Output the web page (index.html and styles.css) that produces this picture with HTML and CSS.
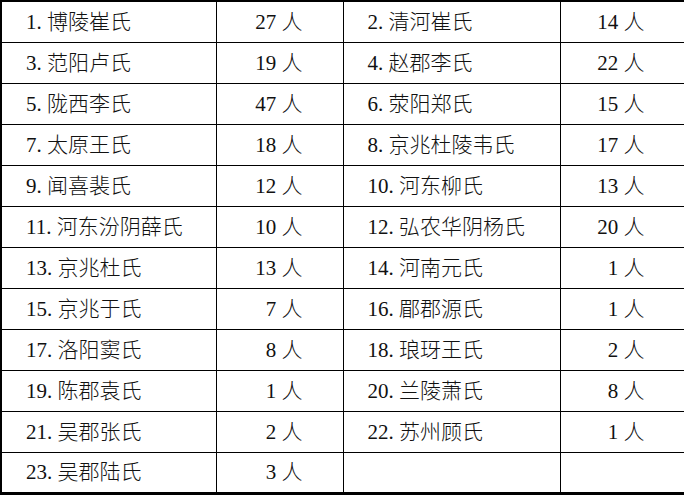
FILE: index.html
```html
<!DOCTYPE html>
<html lang="zh">
<head>
<meta charset="utf-8">
<link rel="stylesheet" href="styles.css">
</head>
<body>
<table class="t">
<colgroup><col class="c1"><col class="c2"><col class="c3"><col class="c4"></colgroup>
<tr><td class="name">1. 博陵崔氏</td><td class="num">27 人</td><td class="name">2. 清河崔氏</td><td class="num">14 人</td></tr>
<tr><td class="name">3. 范阳卢氏</td><td class="num">19 人</td><td class="name">4. 赵郡李氏</td><td class="num">22 人</td></tr>
<tr><td class="name">5. 陇西李氏</td><td class="num">47 人</td><td class="name">6. 荥阳郑氏</td><td class="num">15 人</td></tr>
<tr><td class="name">7. 太原王氏</td><td class="num">18 人</td><td class="name">8. 京兆杜陵韦氏</td><td class="num">17 人</td></tr>
<tr><td class="name">9. 闻喜裴氏</td><td class="num">12 人</td><td class="name">10. 河东柳氏</td><td class="num">13 人</td></tr>
<tr><td class="name">11. 河东汾阴薛氏</td><td class="num">10 人</td><td class="name">12. 弘农华阴杨氏</td><td class="num">20 人</td></tr>
<tr><td class="name">13. 京兆杜氏</td><td class="num">13 人</td><td class="name">14. 河南元氏</td><td class="num">1 人</td></tr>
<tr><td class="name">15. 京兆于氏</td><td class="num">7 人</td><td class="name">16. 郿郡源氏</td><td class="num">1 人</td></tr>
<tr><td class="name">17. 洛阳窦氏</td><td class="num">8 人</td><td class="name">18. 琅玡王氏</td><td class="num">2 人</td></tr>
<tr><td class="name">19. 陈郡袁氏</td><td class="num">1 人</td><td class="name">20. 兰陵萧氏</td><td class="num">8 人</td></tr>
<tr><td class="name">21. 吴郡张氏</td><td class="num">2 人</td><td class="name">22. 苏州顾氏</td><td class="num">1 人</td></tr>
<tr><td class="name">23. 吴郡陆氏</td><td class="num">3 人</td><td class="name"></td><td class="num"></td></tr>
</table>
</body>
</html>
```
FILE: styles.css
```css
html, body {
  margin: 0;
  padding: 0;
  background: #fff;
}
.t {
  border-collapse: collapse;
  table-layout: fixed;
  width: 688px;
  border-top: 2px solid #000;
  border-left: 2px solid #000;
  border-bottom: 3px solid #000;
  font-family: "Liberation Serif", "Noto Sans CJK SC", serif;
  font-size: 21px;
  font-weight: 300;
  color: #111;
}
.c1 { width: 215px; }
.c2 { width: 127px; }
.c3 { width: 217px; }
.c4 { width: 129px; }
.t tr { height: 41px; }
.t td {
  border: 1px solid #000;
  padding: 0;
  vertical-align: middle;
  white-space: nowrap;
  line-height: 24px;
}
.t td.name { padding-left: 24px; }
.t td.num { text-align: right; padding-right: 40px; }
.t td.num:last-child { padding-right: 44px; }
```
